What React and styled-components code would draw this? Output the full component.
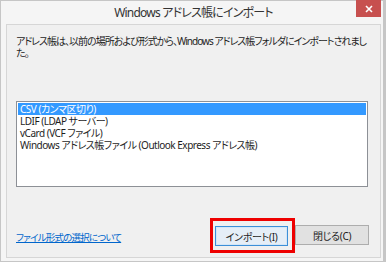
import styled, { createGlobalStyle } from "styled-components";

const Global = createGlobalStyle`
   html, body {
      margin: 0;
      padding: 0;
      background: #f5f5f5;
   }
   * {
      box-sizing: border-box;
   }
`;

const FONT = `"Noto Sans", "Noto Sans CJK JP", sans-serif`;

const Window = styled.div`
   width: 386px;
   height: 262px;
   display: flex;
   flex-direction: column;
   border: 1px solid #c6c6c6;
   border-right-width: 3px;
   background: #f5f5f5;
   padding: 0 2px 3px 5px;
   font-family: ${FONT};
   font-feature-settings: "palt";
   color: #1e1e1e;
`;

const TitleBar = styled.div`
   height: 23px;
   display: grid;
   grid-template-columns: 1fr auto 1fr;
   align-items: start;
`;

const Title = styled.div`
   grid-column: 2;
   padding-top: 3px;
   font-size: 12px;
   letter-spacing: -0.8px;
   line-height: 18px;
   color: #333;
`;

const CloseButton = styled.div`
   grid-column: 3;
   justify-self: end;
   width: 25px;
   height: 17px;
   margin-top: -1px;
   margin-right: 0;
   background: #c7504f;
   display: flex;
   align-items: center;
   justify-content: center;
`;

const Panel = styled.div`
   flex: 1;
   display: flex;
   flex-direction: column;
   border: 1px solid #d6d6d6;
   background: #f0f0f0;
   padding: 10px 11px 4px 9px;
`;

const Description = styled.p`
   margin: 0;
   font-size: 10px;
   letter-spacing: -1px;
   line-height: 12px;
   height: 24px;
   white-space: nowrap;
`;

const ListBox = styled.div`
   margin-top: 42px;
   height: 86px;
   margin-right: 1px;
   border: 1px solid #8d9096;
   background: #fff;
   padding: 1px 1px;
`;

const Item = styled.div`
   height: 12px;
   line-height: 12px;
   font-size: 10px;
   letter-spacing: -0.5px;
   padding-left: 2px;
   white-space: nowrap;
   background: ${(p) => (p.$selected ? "#3399ff" : "transparent")};
   color: ${(p) => (p.$selected ? "#fff" : "#1e1e1e")};
`;

const Footer = styled.div`
   margin-top: auto;
   display: flex;
   align-items: center;
   justify-content: space-between;
`;

const HelpLink = styled.a`
   font-size: 9.5px;
   letter-spacing: -0.8px;
   color: #0066cc;
   text-decoration: underline;
   margin-top: 4px;
`;

const Buttons = styled.div`
   display: flex;
   align-items: center;
`;

const Highlight = styled.div`
   border: 3px solid #ee0000;
   padding: 3px 4px 4px 2px;
`;

const Button = styled.button`
   width: ${(p) => (p.$primary ? "73px" : "74px")};
   height: 20px;
   padding: 0;
   font-family: ${FONT};
   font-feature-settings: "palt";
   font-size: 10px;
   letter-spacing: -0.3px;
   color: #1e1e1e;
   border: 1px solid ${(p) => (p.$primary ? "#3c8fd8" : "#adadad")};
   background: ${(p) => (p.$primary ? "#e5eef7" : "#e1e1e1")};
   box-shadow: ${(p) => (p.$primary ? "inset 0 0 0 1px #d3e6f7" : "none")};
`;

const formats = [
   "CSV (カンマ区切り)",
   "LDIF (LDAP サーバー)",
   "vCard (VCF ファイル)",
   "Windows アドレス帳ファイル (Outlook Express アドレス帳)",
];

export default function App() {
   return (
      <>
         <Global />
         <Window>
            <TitleBar>
               <Title>Windows アドレス帳にインポート</Title>
               <CloseButton>
                  <svg width="8" height="8" viewBox="0 0 8 8">
                     <path d="M1 1L7 7M7 1L1 7" stroke="#fff" strokeWidth="1.6" />
                  </svg>
               </CloseButton>
            </TitleBar>
            <Panel>
               <Description>
                  アドレス帳は、以前の場所および形式から、Windows アドレス帳フォルダにインポートされまし
                  <br />
                  た。
               </Description>
               <ListBox>
                  {formats.map((f, i) => (
                     <Item key={f} $selected={i === 0}>
                        {f}
                     </Item>
                  ))}
               </ListBox>
               <Footer>
                  <HelpLink href="#">ファイル形式の選択について</HelpLink>
                  <Buttons>
                     <Highlight>
                        <Button $primary>インポート(I)</Button>
                     </Highlight>
                     <Button>閉じる(C)</Button>
                  </Buttons>
               </Footer>
            </Panel>
         </Window>
      </>
   );
}
